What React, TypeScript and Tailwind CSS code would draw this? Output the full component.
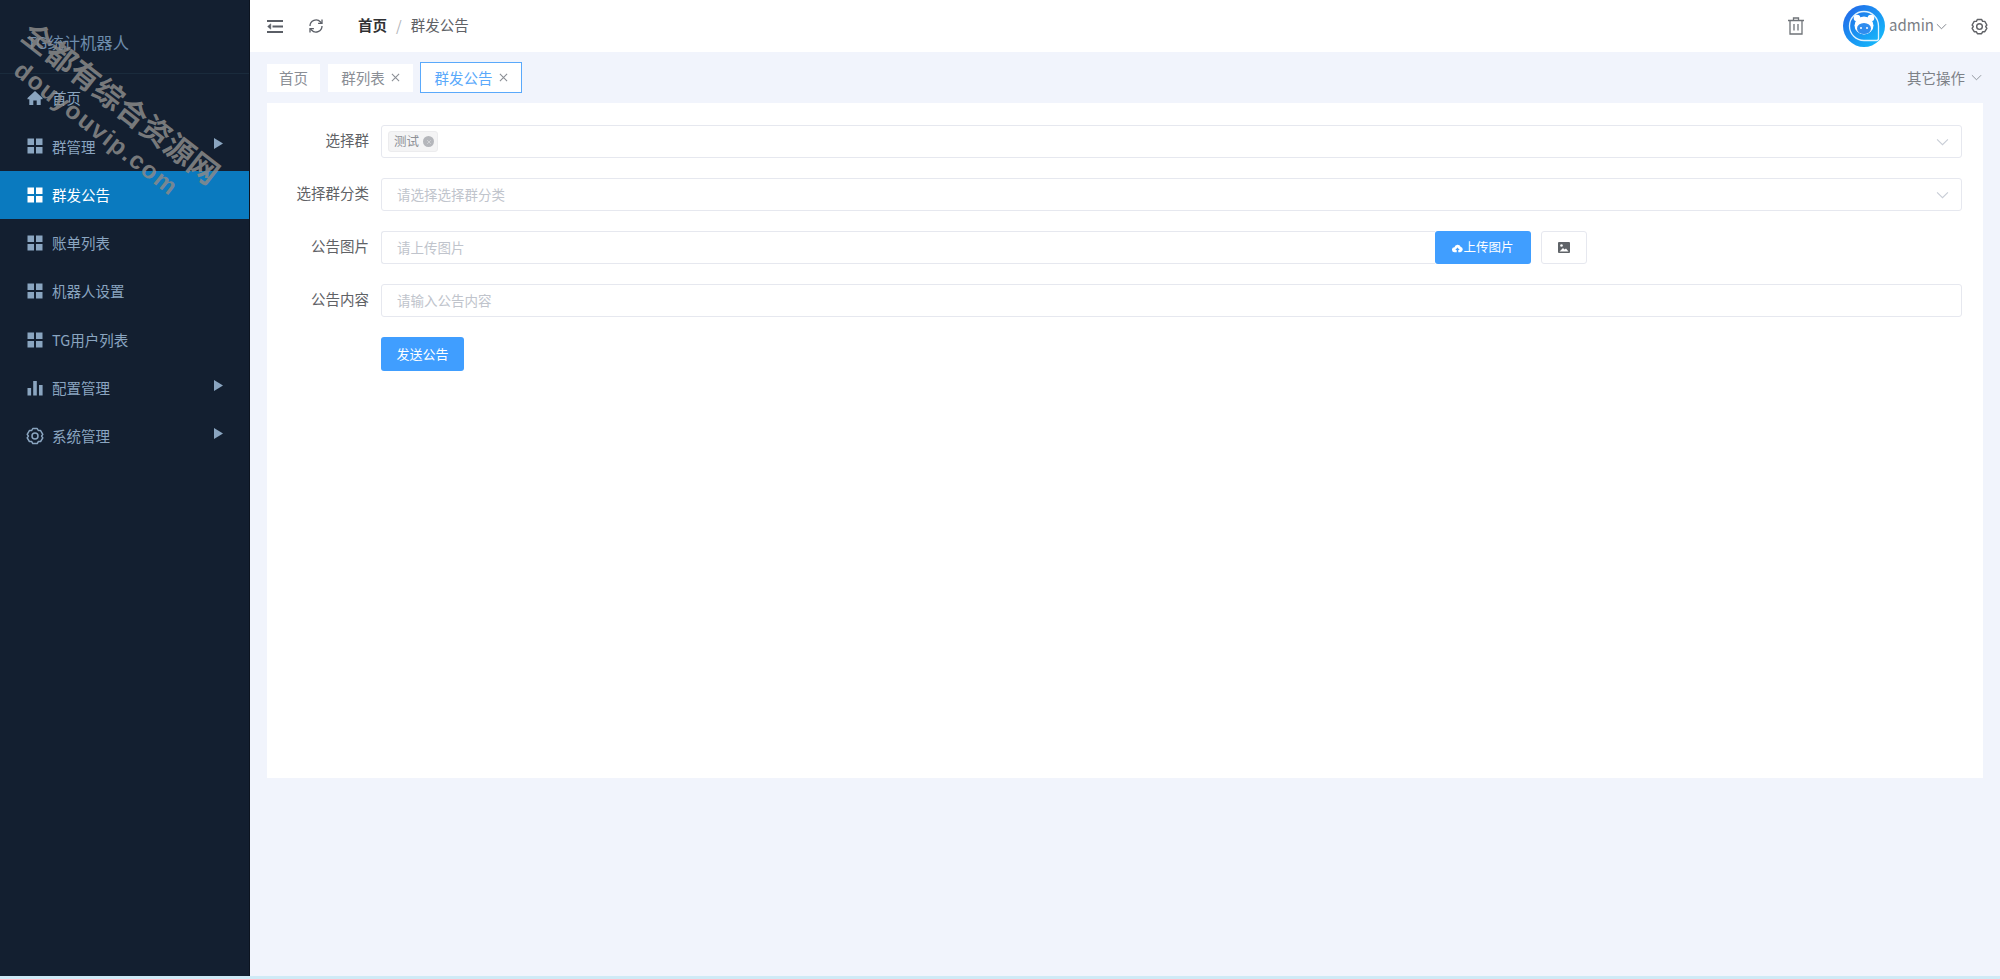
import React from 'react';

const GridIcon = () => (
  <svg viewBox="0 0 16 16" className="w-[16px] h-[16px]" fill="currentColor">
    <rect x="0.5" y="0.5" width="6.5" height="6.5" />
    <rect x="9" y="0.5" width="6.5" height="6.5" />
    <rect x="0.5" y="9" width="6.5" height="6.5" />
    <rect x="9" y="9" width="6.5" height="6.5" />
  </svg>
);

const HomeIcon = () => (
  <svg viewBox="0 0 16 16" className="w-[16px] h-[16px]" fill="currentColor">
    <path d="M8 1 0.5 8v1.2h1.8V15h4V10.5h3.4V15h4V9.2h1.8V8z" />
  </svg>
);

const ChartIcon = () => (
  <svg viewBox="0 0 16 16" className="w-[16px] h-[16px]" fill="currentColor">
    <rect x="0.5" y="8" width="3.6" height="7.5" />
    <rect x="6.2" y="1" width="3.6" height="14.5" />
    <rect x="12" y="5" width="3.6" height="10.5" />
  </svg>
);

const GearIcon = ({ className }: { className: string }) => (
  <svg viewBox="0 0 18 18" className={className} fill="none" stroke="currentColor" strokeWidth="1.5" strokeLinejoin="round">
    <path d="M6.8 1.5h4.4l1.1 2 2.3.1 2.2 3.8-1.2 1.6 1.2 1.9-2.2 3.6-2.3.1-1.1 2H6.8l-1.1-2-2.3-.1-2.2-3.6L2.400 9 1.200 7.400l2.200-3.800 2.300-.1z" />
    <circle cx="9" cy="9" r="3" />
  </svg>
);

const Caret = () => (
  <svg viewBox="0 0 9 11" className="w-[9px] h-[11px]" fill="currentColor">
    <path d="M0 0l9 5.500-9 5.500z" />
  </svg>
);

const Chevron = ({ className }: { className: string }) => (
  <svg viewBox="0 0 12 7" className={className} fill="none" stroke="currentColor" strokeWidth="1">
    <path d="M1 1l5 5 5-5" />
  </svg>
);

const Close = () => (
  <svg viewBox="0 0 10 10" className="w-[9px] h-[9px]" fill="none" stroke="currentColor" strokeWidth="1.2">
    <path d="M1 1l8 8M9 1l-8 8" />
  </svg>
);

const menu = [
  { label: '首页', icon: <HomeIcon /> },
  { label: '群管理', icon: <GridIcon />, sub: true },
  { label: '群发公告', icon: <GridIcon />, active: true },
  { label: '账单列表', icon: <GridIcon /> },
  { label: '机器人设置', icon: <GridIcon /> },
  { label: 'TG用户列表', icon: <GridIcon /> },
  { label: '配置管理', icon: <ChartIcon />, sub: true },
  { label: '系统管理', icon: <GearIcon className="w-[18px] h-[18px] -ml-[1px] -mr-[1px]" />, sub: true },
];

function Sidebar() {
  return (
    <aside className="w-[250px] shrink-0 bg-[#131f30] border-r border-[#0c1420]">
      <div className="h-[74px] pl-[27px] pt-[29px] border-b border-[#1a2b3c] text-[16.300px] leading-[26px] text-[#6d8cab]">
        TG统计机器人
      </div>
      {menu.map((item) => (
        <div
          key={item.label}
          className={
            item.active
              ? 'h-[48.300px] pl-[27px] pr-[26px] flex items-center bg-[#0a7abf] text-white'
              : 'h-[48.300px] pl-[27px] pr-[26px] flex items-center text-[#8aa5c0]'
          }
        >
          {item.icon}
          <span className="ml-[9px] text-[14.500px] flex-1">{item.label}</span>
          {item.sub && (
            <span className="-mt-[5px]">
              <Caret />
            </span>
          )}
        </div>
      ))}
    </aside>
  );
}

function Header() {
  return (
    <header className="h-[52px] shrink-0 bg-white flex items-center pl-[17px] pr-[12px] text-[#5a5e66]">
      <svg viewBox="0 0 16 13" className="w-[16px] h-[13px]" fill="none" stroke="currentColor" strokeWidth="2">
        <path d="M0 1h16M5.500 6.500H16M0 12h16" />
        <path d="M3.800 3.800 .6 6.500l3.200 2.700z" fill="currentColor" strokeWidth="0.500" />
      </svg>
      <svg viewBox="0 0 16 16" className="w-[16px] h-[16px] ml-[25px]" fill="none" stroke="currentColor" strokeWidth="1.300">
        <path d="M2 8a6 6 0 0 1 10.500-4l1 1.200" />
        <path d="M14 8a6 6 0 0 1-10.500 4l-1-1.200" />
        <path d="M14 1.500v3.900h-3.900M2 14.500v-3.900h3.900" />
      </svg>
      <span className="ml-[34px] -mt-[2px] text-[14.500px] font-bold text-[#303133]">首页</span>
      <span className="mx-[9px] -mt-[2px] text-[14.500px] text-[#b0b3b8]">/</span>
      <span className="-mt-[2px] text-[14.500px] text-[#606266]">群发公告</span>
      <div className="flex-1" />
      <svg viewBox="0 0 16 18" className="w-[16px] h-[18px] text-[#6f7378]" fill="none" stroke="currentColor" strokeWidth="1.300">
        <path d="M0 3.500h16M5.500 3.500V1h5v2.500M2 3.500V17h12V3.500M6 7v6.500M10 7v6.500" />
      </svg>
      <div className="ml-[39px] w-[42px] h-[42px] rounded-full bg-gradient-to-br from-[#2560e6] to-[#17c3fc]">
        <svg viewBox="0 0 42 42" className="w-[42px] h-[42px]">
          {/* chat bubble outline with the bear's head inside */}
          <path d="M21 6.500a14.500 14.500 0 1 0 0 29h12.500c1.200 0 2-.8 2-2V21A14.500 14.500 0 0 0 21 6.500z" fill="none" stroke="#dff3ff" strokeWidth="1.300" />
          <circle cx="14" cy="13" r="3.300" fill="#ffffff" />
          <circle cx="28" cy="13" r="3.300" fill="#ffffff" />
          <ellipse cx="21" cy="20.500" rx="9.500" ry="9" fill="#ffffff" />
          <ellipse cx="21" cy="23.500" rx="7" ry="5.500" fill="#2f8cee" />
          <circle cx="18" cy="23" r="1" fill="#ffffff" />
          <circle cx="24" cy="23" r="1" fill="#ffffff" />
        </svg>
      </div>
      <span className="ml-[4px] -mt-[2px] text-[15px] text-[#7a7e85]">admin</span>
      <Chevron className="w-[11px] h-[7px] ml-[2px] text-[#7a7e85]" />
      <GearIcon className="w-[17px] h-[17px] ml-[24px] text-[#606266]" />
    </header>
  );
}

function Tabs() {
  return (
    <div className="h-[51px] shrink-0 flex items-center pl-[17px] pr-[18px] text-[14.500px] text-[#8a8e95]">
      <div className="w-[53px] h-[28px] bg-white flex items-center justify-center">首页</div>
      <div className="ml-[8px] w-[85px] h-[28px] bg-white flex items-center justify-center gap-[6px]">
        群列表
        <Close />
      </div>
      <div className="ml-[7px] w-[102px] h-[31px] bg-white border border-[#5aa9fb] text-[#5aa9fb] flex items-center justify-center gap-[6px]">
        群发公告
        <span className="text-[#8a8e95]">
          <Close />
        </span>
      </div>
      <div className="flex-1" />
      <span className="text-[#7d8187]">其它操作</span>
      <Chevron className="w-[11px] h-[7px] ml-[6px] text-[#8a8e95]" />
    </div>
  );
}

const fieldBox = 'h-[33px] rounded-[3px] border border-[#e6e8ef] bg-white';
const inputText = 'w-full h-full px-[15px] pb-[2px] text-[13.500px] bg-transparent outline-none placeholder:text-[#c0c4cc]';

function Field({ label, children }: { label: string; children: React.ReactNode }) {
  return (
    <div className="flex items-center h-[33px]">
      <label className="w-[102px] shrink-0 pb-[3px] text-right text-[14.500px] text-[#606266]">{label}</label>
      <div className="ml-[12px] flex-1 flex min-w-0">{children}</div>
    </div>
  );
}

function SelectBox({ children }: { children: React.ReactNode }) {
  return (
    <div className={`${fieldBox} flex-1 flex items-center pr-[12px]`}>
      <div className="flex-1 min-w-0 flex items-center">{children}</div>
      <Chevron className="w-[13px] h-[8px] text-[#c8cdd6]" />
    </div>
  );
}

function NoticeForm() {
  return (
    <div className="mx-[17px] h-[675px] bg-white pr-[21px] pt-[22px] flex flex-col gap-[20px]">
      <Field label="选择群">
        <SelectBox>
          <span className="ml-[6px] h-[21px] pl-[5px] pr-[3px] rounded-[3px] bg-[#f4f4f5] border border-[#ececee] flex items-center gap-[4px] text-[12.500px] text-[#8d9096]">
            测试
            <span className="w-[11px] h-[11px] rounded-full bg-[#b4b6bb] flex items-center justify-center text-[#e4e5e8]">
              <svg viewBox="0 0 10 10" className="w-[6px] h-[6px]" fill="none" stroke="currentColor" strokeWidth="1">
                <path d="M2 2l6 6M8 2l-6 6" />
              </svg>
            </span>
          </span>
        </SelectBox>
      </Field>
      <Field label="选择群分类">
        <SelectBox>
          <input className={inputText} placeholder="请选择选择群分类" readOnly />
        </SelectBox>
      </Field>
      <Field label="公告图片">
        <div className={`${fieldBox} w-[1054px] rounded-r-none border-r-0`}>
          <input className={inputText} placeholder="请上传图片" readOnly />
        </div>
        <button className="w-[96px] h-[33px] rounded-[3px] bg-[#409eff] text-white text-[12.500px] flex items-center justify-center">
          <svg viewBox="0 0 14 12" className="w-[11px] h-[10px]" fill="currentColor">
            <path d="M3.500 11.500a3.300 3.300 0 0 1-.4-6.600A4.200 4.200 0 0 1 11 4.300a3.700 3.700 0 0 1-.4 7.200H8V8.500h1.800L7 5.500 4.200 8.500H6v3z" />
          </svg>
          上传图片
        </button>
        <button className="ml-[10px] w-[46px] h-[33px] rounded-[3px] border border-[#e6e8ef] bg-white flex items-center justify-center">
          <svg viewBox="0 0 12 11" className="w-[12px] h-[11px]">
            <rect width="12" height="11" rx="1" fill="#5f6368" />
            <circle cx="3.500" cy="3.500" r="1.300" fill="#ffffff" />
            <path d="M1.500 9.500 5 6l1.500 1.500L8 6.500l2.500 3z" fill="#ffffff" />
          </svg>
        </button>
      </Field>
      <Field label="公告内容">
        <div className={`${fieldBox} flex-1`}>
          <input className={inputText} placeholder="请输入公告内容" readOnly />
        </div>
      </Field>
      <div className="pl-[114px]">
        <button className="w-[83px] h-[34px] rounded-[3px] bg-[#409eff] text-white text-[13px]">发送公告</button>
      </div>
    </div>
  );
}

export default function App() {
  return (
    <div className="relative h-[979px] overflow-hidden flex flex-col font-['Noto_Sans_CJK_SC',sans-serif] bg-[#f1f4fc]">
      <div className="flex-1 flex min-h-0">
        <Sidebar />
        <main className="flex-1 min-w-0 flex flex-col">
          <Header />
          <Tabs />
          <NoticeForm />
        </main>
      </div>
      <div className="h-[3px] shrink-0 bg-[#cfeaf6]" />

      {/* watermark over the sidebar corner */}
      <div className="absolute left-[122px] top-[102px] -translate-x-1/2 -translate-y-1/2 rotate-[38deg] whitespace-nowrap text-[30px] leading-none font-bold text-[#8a8a8a]/85 pointer-events-none">
        全都有综合资源网
      </div>
      <div className="absolute left-[96px] top-[129px] -translate-x-1/2 -translate-y-1/2 rotate-[38deg] whitespace-nowrap text-[24.500px] leading-none font-bold tracking-[1.500px] font-['Liberation_Sans',sans-serif] text-[#8a8a8a]/85 pointer-events-none">
        douyouvip.com
      </div>
    </div>
  );
}
